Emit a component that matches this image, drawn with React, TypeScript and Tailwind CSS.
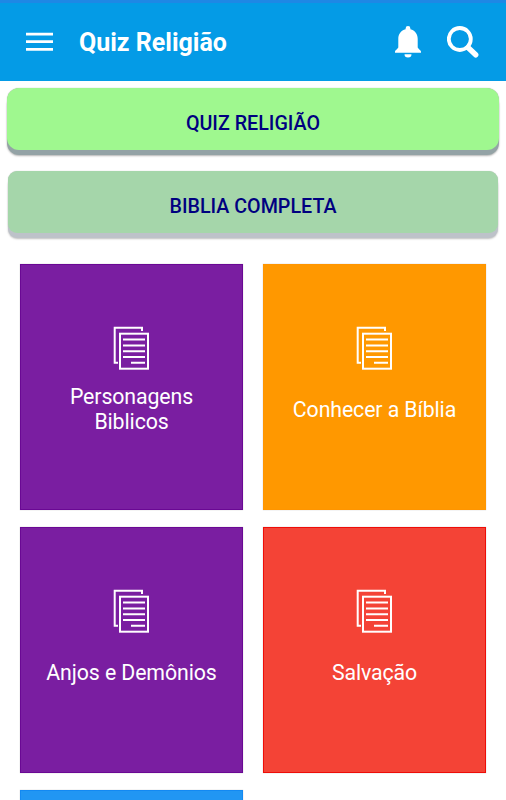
type CardProps = {
  title: string;
  color: string;
};

const cards: CardProps[] = [
  { title: 'Personagens Biblicos', color: 'bg-[#7a1ea1] border-[#6a0894]' },
  { title: 'Conhecer a Bíblia', color: 'bg-[#ff9800] border-[#ff9500]' },
  { title: 'Anjos e Demônios', color: 'bg-[#7a1ea1] border-[#6a0894]' },
  { title: 'Salvação', color: 'bg-[#f44336] border-[#ee0d08]' },
  { title: '', color: 'bg-[#2196f3] border-[#1389f2]' },
];

function MenuIcon() {
  return (
    <svg width="28" height="20" viewBox="0 0 28 20" fill="#fff">
      <path d="M0 .7h27v2.8H0zM0 8.3h27v2.8H0zM0 15.9h27v2.8H0z" />
    </svg>
  );
}

function BellIcon() {
  return (
    <svg width="26" height="32" viewBox="0 0 26 32" fill="#fff">
      <path d="M13 0a2.4 2.4 0 0 1 2.4 2.4v.8C20 4.3 22.7 8 22.7 12.8v8.4c0 1.5 3.3 2.7 3.3 4.5v1.1H0v-1.1c0-1.8 3.3-3 3.3-4.5v-8.4C3.3 8 6 4.3 10.6 3.2v-.8A2.4 2.4 0 0 1 13 0z" />
      <path d="M9.5 28.3h7a3.5 3.2 0 0 1-7 0z" />
    </svg>
  );
}

function SearchIcon() {
  return (
    <svg width="32" height="32" viewBox="0 0 32 32" fill="none" stroke="#fff">
      <circle cx="12.8" cy="13" r="11" strokeWidth="3.8" />
      <path d="M21 21.5l7.7 7.3" strokeWidth="5.4" strokeLinecap="round" />
    </svg>
  );
}

function PagesIcon() {
  return (
    <svg width="37" height="44" viewBox="0 0 37 44" fill="none" stroke="#fff" strokeWidth="2">
      <path d="M29 5V1.7H1.7v35H5" />
      <rect x="7" y="7.7" width="28" height="35" />
      <path d="M10 13.4h22M10 19.4h22M10 25.2h22M10 31h22M18 36.8h14" />
    </svg>
  );
}

function Card({ title, color }: CardProps) {
  return (
    <div className={`flex h-[246px] flex-col items-center border pt-[61px] shadow-[0_0_1px_rgba(0,0,0,0.25)] ${color}`}>
      <PagesIcon />
      <div className="mt-3.5 flex h-[51px] w-[180px] items-center justify-center text-center text-[21.3px] leading-[25px] tracking-[-0.1px] text-white">
        {title}
      </div>
    </div>
  );
}

export default function App() {
  return (
    <div className="h-[800px] w-full overflow-hidden bg-white font-['Roboto',sans-serif]">
      {/* App bar */}
      <header className="flex h-[81px] items-center border-t-[3px] border-[#1e88e5] bg-[#049be6] pr-[27px] pl-[26px]">
        <MenuIcon />
        <h1 className="ml-[25px] flex-1 pt-px text-[25px] leading-none font-bold text-white">Quiz Religião</h1>
        <BellIcon />
        <div className="ml-[26px]">
          <SearchIcon />
        </div>
      </header>

      {/* Main actions */}
      <div className="flex flex-col px-[7px] pt-[7.4px]">
        <button className="h-[62px] rounded-[12px] bg-[#9ff88f] pt-[9px] text-[19.7px] font-medium text-[#000080] shadow-[0_5px_0_#94a3a6,0_6px_2px_rgba(0,0,0,0.3),0_0_1px_rgba(0,0,0,0.4)]">
          QUIZ RELIGIÃO
        </button>
        <button className="mx-px mt-[20.6px] h-[62px] rounded-[9px] bg-[#a5d6aa] pt-2.5 text-[19.7px] font-medium text-[#000080] shadow-[0_5px_0_#bdc2c9,0_6px_2px_rgba(0,0,0,0.25),0_0_1px_rgba(0,0,0,0.3)]">
          BIBLIA COMPLETA
        </button>
      </div>

      {/* Categories */}
      <div className="grid grid-cols-2 gap-x-5 gap-y-[17px] px-5 pt-[31px]">
        {cards.map((card, i) => (
          <Card key={i} {...card} />
        ))}
      </div>
    </div>
  );
}
